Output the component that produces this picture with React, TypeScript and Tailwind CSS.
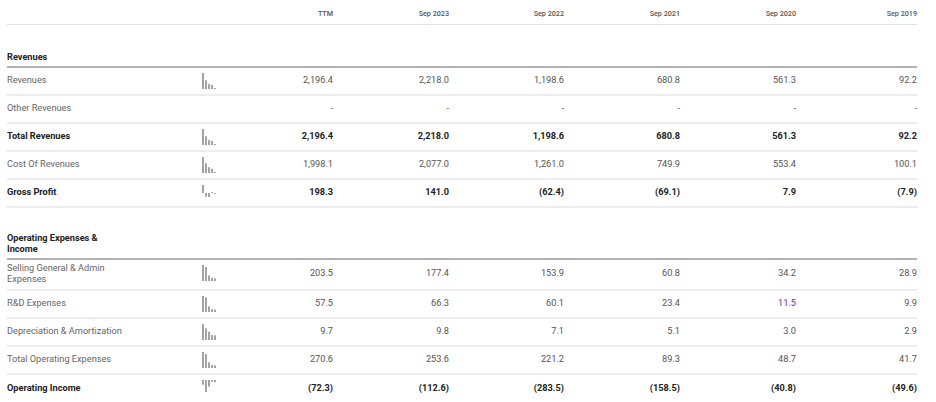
import React from "react";

type Row = {
  label: string;
  bold?: boolean;
  values: string[];
  spark?: number[];
  h?: string;
  purple?: number;
};

const GRID =
  "grid grid-cols-[193px_17px_116px_116px_115px_116px_116px_121px]";

function Spark({ data }: { data: number[] }) {
  const max = Math.max(0, ...data);
  const min = Math.min(0, ...data);
  const allPos = min === 0;
  const H = allPos ? 16 : 12;
  const scale = H / (max - min || 1);
  const base = max * scale;
  return (
    <svg width="17" height="18" className="block">
      {data.map((v, i) => {
        const h = Math.max(1, Math.abs(v) * scale);
        const y = v >= 0 ? base - h : base;
        return (
          <rect
            key={i}
            x={2 + i * 3}
            y={y}
            width={2}
            height={h}
            fill="#a3a3a3"
          />
        );
      })}
    </svg>
  );
}

function DataRow({ row, last }: { row: Row; last?: boolean }) {
  const txt = row.bold
    ? "font-bold text-[#222222]"
    : "text-[#666666]";
  const num = row.bold ? "font-bold text-[#222222]" : "text-[#555555]";
  return (
    <div
      className={`${GRID} ${row.h ?? "h-[28px]"} ${
        last ? "" : "border-b-2 border-[#ececec]"
      }`}
    >
      <div className={`flex items-center pb-[4px] ${txt}`}>
        <div className="w-[118px]">{row.label}</div>
      </div>
      <div className="pt-[5px]">{row.spark && <Spark data={row.spark} />}</div>
      {row.values.map((v, i) => (
        <div
          key={i}
          className={`flex items-center justify-end pb-[4px] ${
            row.purple === i ? "text-[#7b1fa2]" : num
          }`}
        >
          {v}
        </div>
      ))}
    </div>
  );
}

const revenues: Row[] = [
  {
    label: "Revenues",
    values: ["2,196.4", "2,218.0", "1,198.6", "680.8", "561.3", "92.2"],
    spark: [2218, 1198.6, 680.8, 561.3, 92.2],
  },
  {
    label: "Other Revenues",
    values: ["-", "-", "-", "-", "-", "-"],
  },
  {
    label: "Total Revenues",
    bold: true,
    values: ["2,196.4", "2,218.0", "1,198.6", "680.8", "561.3", "92.2"],
    spark: [2218, 1198.6, 680.8, 561.3, 92.2],
  },
  {
    label: "Cost Of Revenues",
    values: ["1,998.1", "2,077.0", "1,261.0", "749.9", "553.4", "100.1"],
    spark: [2077, 1261, 749.9, 553.4, 100.1],
  },
  {
    label: "Gross Profit",
    bold: true,
    values: ["198.3", "141.0", "(62.4)", "(69.1)", "7.9", "(7.9)"],
    spark: [141, -62.4, -69.1, 7.9, -7.9],
  },
];

const opex: Row[] = [
  {
    label: "Selling General & Admin Expenses",
    values: ["203.5", "177.4", "153.9", "60.8", "34.2", "28.9"],
    spark: [177.4, 153.9, 60.8, 34.2, 28.9],
    h: "h-[31px]",
  },
  {
    label: "R&D Expenses",
    values: ["57.5", "66.3", "60.1", "23.4", "11.5", "9.9"],
    spark: [66.3, 60.1, 23.4, 11.5, 9.9],
    purple: 4,
  },
  {
    label: "Depreciation & Amortization",
    values: ["9.7", "9.8", "7.1", "5.1", "3.0", "2.9"],
    spark: [9.8, 7.1, 5.1, 3.0, 2.9],
  },
  {
    label: "Total Operating Expenses",
    values: ["270.6", "253.6", "221.2", "89.3", "48.7", "41.7"],
    spark: [253.6, 221.2, 89.3, 48.7, 41.7],
  },
  {
    label: "Operating Income",
    bold: true,
    values: ["(72.3)", "(112.6)", "(283.5)", "(158.5)", "(40.8)", "(49.6)"],
    spark: [-112.6, -283.5, -158.5, -40.8, -49.6],
  },
];

function Section({ title, h }: { title: string; h: string }) {
  return (
    <div className={`${GRID} ${h} border-b-2 border-[#b3b3b3]`}>
      <div className="flex items-end pb-[4px] font-bold text-[#222222]">
        <div className="w-[118px]">{title}</div>
      </div>
    </div>
  );
}

export default function App() {
  const heads = ["TTM", "Sep 2023", "Sep 2022", "Sep 2021", "Sep 2020", "Sep 2019"];
  return (
    <div
      className="w-[936px] h-[402px] overflow-hidden bg-white text-[9.2px] leading-[11px]"
      style={{ fontFamily: "Roboto, 'Liberation Sans', sans-serif" }}
    >
      <div className="ml-[7px] w-[910px]">
        <div className={`${GRID} h-[25px] border-b border-[#e3e3e3]`}>
          <div />
          <div />
          {heads.map((h) => (
            <div
              key={h}
              className="flex items-end justify-end pb-[5px] text-[7.2px] leading-[10px] font-medium text-[#555555]"
            >
              {h}
            </div>
          ))}
        </div>
        <Section title="Revenues" h="h-[43px]" />
        {revenues.map((r) => (
          <DataRow key={r.label} row={r} />
        ))}
        <Section title="Operating Expenses & Income" h="h-[52px]" />
        {opex.map((r, i) => (
          <DataRow key={r.label} row={r} last={i === opex.length - 1} />
        ))}
      </div>
    </div>
  );
}
